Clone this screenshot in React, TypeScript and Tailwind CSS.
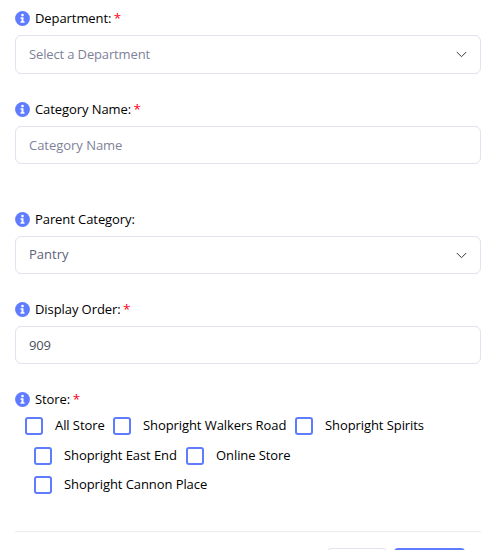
import type { ReactNode } from "react";

function InfoIcon() {
  return (
    <svg className="mr-[5px] size-[15px] shrink-0" viewBox="0 0 15 15">
      <circle cx="7.5" cy="7.5" r="7.4" fill="#5f7bff" />
      <circle cx="7.5" cy="4.1" r="1.35" fill="#fff" />
      <path d="M5.5 6.2h3v4h1v1.5h-4v-1.5h1V7.7h-1z" fill="#fff" />
    </svg>
  );
}

function Label({ text, required = false }: { text: string; required?: boolean }) {
  return (
    <div className="flex h-5 items-center text-[13px] leading-5 tracking-[-0.08px] text-black">
      <InfoIcon />
      <span>{text}</span>
      {required && <span className="ml-[2.5px] text-[13.5px] text-[#ff0018]">*</span>}
    </div>
  );
}

function Field({ children, className }: { children: ReactNode; className: string }) {
  return (
    <div className={`flex items-center justify-between rounded-md border border-[#e1e1ef] pr-[13px] pl-[13px] text-[13px] leading-5 ${className}`}>
      {children}
    </div>
  );
}

function Chevron() {
  return (
    <svg className="h-[7px] w-[11px]" viewBox="0 0 11 7" fill="none" stroke="#343a40">
      <path d="M.8 1 5.5 5.7 10.2 1" />
    </svg>
  );
}

function Check({ text, className = "" }: { text: string; className?: string }) {
  return (
    <label className={`flex h-5 items-center ${className}`}>
      <span className="size-[18px] shrink-0 rounded-[3px] border-2 border-[#5f7bff] bg-white" />
      <span className="-mt-0.5 ml-3 whitespace-nowrap">{text}</span>
    </label>
  );
}

export default function App() {
  return (
    <div className="h-[550px] w-[496px] overflow-hidden bg-white pr-[15px] pl-[15px] font-['Open_Sans','Noto_Sans',sans-serif]">
      <div className="pt-2">
        <Label text="Department:" required />
        <Field className="mt-[7px] h-[39px] text-[#7e8299]">
          <span className="-mt-0.5 tracking-[-0.14px]">Select a Department</span>
          <Chevron />
        </Field>
      </div>
      <div className="pt-[25px]">
        <Label text="Category Name:" required />
        <Field className="mt-[7px] h-[38px] text-[#7e8299]">
          <span className="tracking-[-0.03px]">Category Name</span>
        </Field>
      </div>
      <div className="pt-[45px]">
        <Label text="Parent Category:" />
        <Field className="mt-[7px] h-[38px] text-[#5e6278]">
          <span className="-mt-0.5">Pantry</span>
          <Chevron />
        </Field>
      </div>
      <div className="pt-[25px]">
        <Label text="Display Order:" required />
        <Field className="mt-[7px] h-[38px] text-[#495057]">
          <span className="tracking-[-0.2px]">909</span>
        </Field>
      </div>
      <div className="pt-[25px]">
        <Label text="Store:" required />
        <div className="mt-[7px] pl-2.5 text-[13px] leading-5 tracking-[-0.08px] text-black">
          <div className="flex">
            <Check text="All Store" className="w-[88px]" />
            <Check text="Shopright Walkers Road" className="w-[182px]" />
            <Check text="Shopright Spirits" />
          </div>
          <div className="mt-2.5 flex pl-[9px]">
            <Check text="Shopright East End" className="w-[152px]" />
            <Check text="Online Store" />
          </div>
          <div className="mt-[9px] flex pl-[9px]">
            <Check text="Shopright Cannon Place" />
          </div>
        </div>
      </div>
      <div className="mt-9 flex justify-end gap-[7px] border-t border-[#ececf0] pt-4 pr-4">
        <div className="h-9 w-[60px] rounded border border-[#e1e1ef]" />
        <div className="h-9 w-[71px] rounded bg-[#5f7bff]" />
      </div>
    </div>
  );
}
